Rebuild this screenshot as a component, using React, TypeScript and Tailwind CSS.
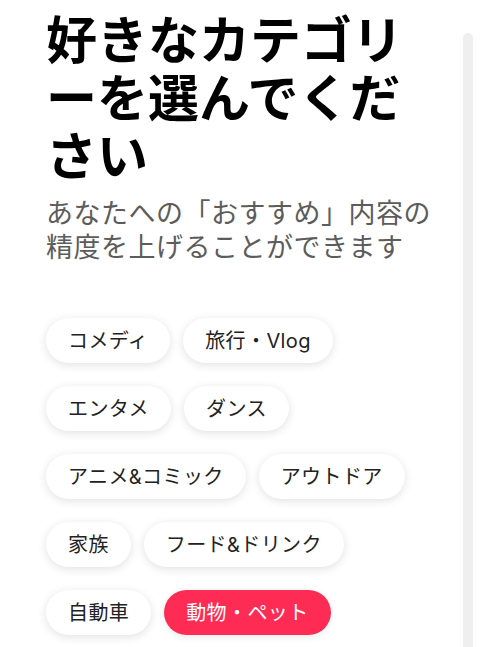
import React from "react";

const cats: { label: string; active?: boolean }[][] = [
  [{ label: "コメディ" }, { label: "旅行・Vlog" }],
  [{ label: "エンタメ" }, { label: "ダンス" }],
  [{ label: "アニメ&コミック" }, { label: "アウトドア" }],
  [{ label: "家族" }, { label: "フード&ドリンク" }],
  [{ label: "自動車" }, { label: "動物・ペット", active: true }],
];

export default function App() {
  return (
    <div
      className="w-[500px] h-[647px] bg-white overflow-hidden flex"
      style={{ fontFamily: '"Noto Sans CJK JP", "Noto Sans", sans-serif' }}
    >
      <div className="w-[444px] shrink-0 pl-[46px] pt-[8px]">
        <h1 className="text-[51px] leading-[58px] font-bold text-black">
          好きなカテゴリーを選んでください
        </h1>
        <p className="mt-[13px] text-[27px] leading-[34px] text-[#5c5c5c] tracking-[0.5px]">
          あなたへの「おすすめ」内容の精度を上げることができます
        </p>
        <div className="mt-[55px] flex flex-col gap-[23px]">
          {cats.map((row, i) => (
            <div key={i} className="flex gap-[13px]">
              {row.map((c) => (
                <div
                  key={c.label}
                  className={
                    c.active
                      ? "h-[45px] px-[22px] rounded-full flex items-center bg-[#fe2c55] text-white text-[20px] tracking-[0.4px] shadow-[0_2px_8px_rgba(0,0,0,0.08)]"
                      : "h-[45px] px-[22px] rounded-full flex items-center bg-white text-[#222] text-[20px] tracking-[0.4px] shadow-[0_2px_10px_rgba(0,0,0,0.12)]"
                  }
                  style={{ fontFamily: 'Inter, "Noto Sans CJK JP", sans-serif' }}
                >
                  {c.label}
                </div>
              ))}
            </div>
          ))}
        </div>
      </div>
      <div className="ml-[19px] pt-[33px] flex">
        <div className="w-[10px] bg-[#efefef] rounded-t-full" />
      </div>
    </div>
  );
}
